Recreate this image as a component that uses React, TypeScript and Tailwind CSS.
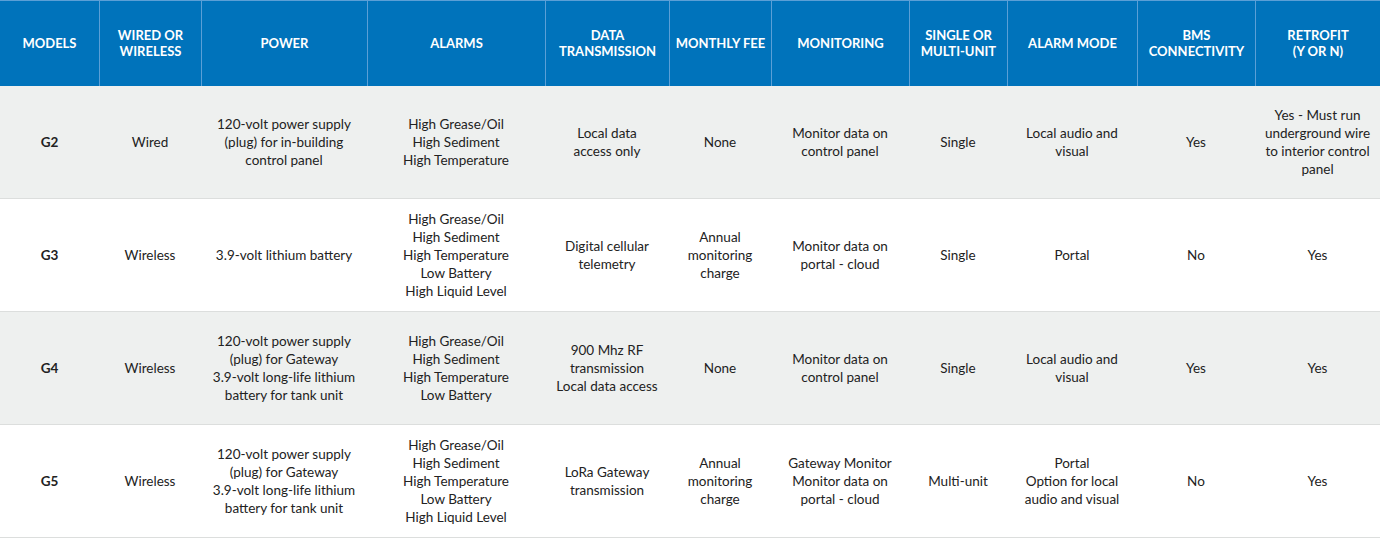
const COLS = [
  "w-[99px]",
  "w-[102px]",
  "w-[166px]",
  "w-[178px]",
  "w-[124px]",
  "w-[102px]",
  "w-[138px]",
  "w-[98px]",
  "w-[130px]",
  "w-[118px]",
  "w-[125px]",
];

const HEADERS = [
  ["MODELS"],
  ["WIRED OR", "WIRELESS"],
  ["POWER"],
  ["ALARMS"],
  ["DATA", "TRANSMISSION"],
  ["MONTHLY FEE"],
  ["MONITORING"],
  ["SINGLE OR", "MULTI-UNIT"],
  ["ALARM MODE"],
  ["BMS", "CONNECTIVITY"],
  ["RETROFIT", "(Y OR N)"],
];

const ROWS: string[][][] = [
  [
    ["G2"],
    ["Wired"],
    ["120-volt power supply", "(plug) for in-building", "control panel"],
    ["High Grease/Oil", "High Sediment", "High Temperature"],
    ["Local data", "access only"],
    ["None"],
    ["Monitor data on", "control panel"],
    ["Single"],
    ["Local audio and", "visual"],
    ["Yes"],
    ["Yes - Must run", "underground wire", "to interior control", "panel"],
  ],
  [
    ["G3"],
    ["Wireless"],
    ["3.9-volt lithium battery"],
    ["High Grease/Oil", "High Sediment", "High Temperature", "Low Battery", "High Liquid Level"],
    ["Digital cellular", "telemetry"],
    ["Annual", "monitoring", "charge"],
    ["Monitor data on", "portal - cloud"],
    ["Single"],
    ["Portal"],
    ["No"],
    ["Yes"],
  ],
  [
    ["G4"],
    ["Wireless"],
    ["120-volt power supply", "(plug) for Gateway", "3.9-volt long-life lithium", "battery for tank unit"],
    ["High Grease/Oil", "High Sediment", "High Temperature", "Low Battery"],
    ["900 Mhz RF", "transmission", "Local data access"],
    ["None"],
    ["Monitor data on", "control panel"],
    ["Single"],
    ["Local audio and", "visual"],
    ["Yes"],
    ["Yes"],
  ],
  [
    ["G5"],
    ["Wireless"],
    ["120-volt power supply", "(plug) for Gateway", "3.9-volt long-life lithium", "battery for tank unit"],
    ["High Grease/Oil", "High Sediment", "High Temperature", "Low Battery", "High Liquid Level"],
    ["LoRa Gateway", "transmission"],
    ["Annual", "monitoring", "charge"],
    ["Gateway Monitor", "Monitor data on", "portal - cloud"],
    ["Multi-unit"],
    ["Portal", "Option for local", "audio and visual"],
    ["No"],
    ["Yes"],
  ],
];

export default function App() {
  return (
    <div className="w-[1380px] h-[538px] bg-white" style={{ fontFamily: "Lato, 'Liberation Sans', sans-serif" }}>
      {/* Header */}
      <div className="flex h-[86px] bg-[#0073bb] border-t border-[#5b9fd6]">
        {HEADERS.map((h, i) => (
          <div
            key={i}
            className={`${COLS[i]} shrink-0 flex flex-col items-center justify-center pb-[2px] text-center text-white font-bold text-[13px] leading-[16px] ${
              i > 0 ? "border-l border-[#5b9fd6]" : ""
            }`}
          >
            {h.map((line) => (
              <div key={line}>{line}</div>
            ))}
          </div>
        ))}
      </div>

      {/* Body */}
      {ROWS.map((row, r) => (
        <div
          key={r}
          className={`flex h-[113px] border-b border-[#dcdedd] ${r % 2 === 0 ? "bg-[#eef0ef]" : "bg-white"}`}
        >
          {row.map((cell, c) => (
            <div
              key={c}
              className={`${COLS[c]} shrink-0 flex flex-col items-center justify-center text-center text-[13.5px] leading-[18px] text-[#222] ${
                c === 0 ? "font-bold" : ""
              }`}
            >
              {cell.map((line, k) => (
                <div key={k}>{line}</div>
              ))}
            </div>
          ))}
        </div>
      ))}
    </div>
  );
}
